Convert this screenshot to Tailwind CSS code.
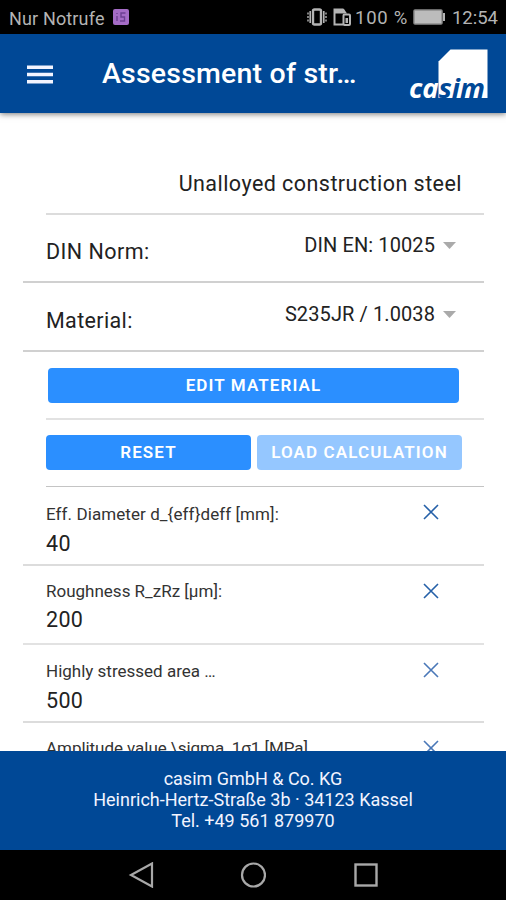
<!DOCTYPE html>
<html lang="en">
<head>
    <meta charset="UTF-8">
    <meta name="viewport" content="width=device-width, initial-scale=1.0">
    <title>Assessment of strength</title>
    <script src="https://cdn.jsdelivr.net/npm/@tailwindcss/browser@4"></script>
</head>
<body class="bg-white font-['Roboto',sans-serif] text-[#222]">

<div class="flex flex-col w-[506px] h-[900px] overflow-hidden">

    <!-- Status bar -->
    <div class="flex items-center shrink-0 h-[34px] bg-black text-[#b4b4b4] text-[18px] pl-[9px] pr-2 pt-[2px]">
        <span class="tracking-[0.15px]">Nur Notrufe</span>
        <svg class="ml-2 mb-[2px]" width="16" height="16" viewBox="0 0 16 16">
            <rect width="16" height="16" rx="2" fill="#a56cc6"/>
            <path d="M4 4v1M4 7v5M12.500 4H8v4h3.500v4H7" fill="none" stroke="#6d3f92" stroke-width="1.400"/>
        </svg>
        <div class="flex items-center ml-auto">
            <svg class="mr-[1px] mb-[2px]" width="20" height="18" viewBox="0 0 20 18" fill="none" stroke="#b4b4b4">
                <rect x="6" y="1.5" width="8" height="15" rx="1.5" stroke-width="2.4"/>
                <path d="M3.2 3v12M16.8 3v12" stroke-width="1.6"/>
                <path d="M1 4.5v9M19 4.5v9" stroke-width="1.4" stroke-dasharray="2 1.5"/>
            </svg>
            <svg class="ml-[4px] mb-[2px]" width="20" height="18" viewBox="0 0 20 18" fill="none" stroke="#b4b4b4">
                <path d="M11 16.500H2.500V1.500h9" stroke-width="2"/>
                <path d="M2 1h10l3 4.500H2z" fill="#b4b4b4" stroke="none"/>
                <rect x="11.500" y="6.500" width="6.500" height="10.500" rx="1" stroke-width="2"/>
                <rect x="13.500" y="10" width="2.500" height="5" fill="#b4b4b4" stroke="none"/>
            </svg>
            <span class="ml-[3px] pt-[1px] text-[18.500px] tracking-[0.7px]">100 %</span>
            <svg class="ml-[5px] mb-[2px]" width="33" height="16" viewBox="0 0 33 16">
                <rect x="1" y="1" width="28" height="14" rx="1" fill="#bcbcbc" stroke="#8c8c8c" stroke-width="1.500"/>
                <path d="M30 4h2v8h-2z" fill="#b4b4b4"/>
            </svg>
            <span class="ml-[6px] pt-[1px] text-[18.500px]">12:54</span>
        </div>
    </div>

    <!-- Toolbar -->
    <header class="relative z-10 flex items-center shrink-0 h-[79px] bg-[#004896] text-white shadow-[0_1px_6px_rgba(0,0,0,0.55)]">
        <svg class="ml-[27px] mt-[1px]" width="26" height="19" viewBox="0 0 26 19" stroke="#f2f4ff" stroke-width="3.600">
            <path d="M0 2.300h26M0 9.500h26M0 16.700h26"/>
        </svg>
        <h1 class="ml-[49px] pt-[2px] w-[270px] text-[28.500px] font-medium tracking-[0.2px] whitespace-nowrap">Assessment of str…</h1>
        <svg class="ml-auto mr-[14px]" width="85" height="58" viewBox="0 0 85 58">
            <defs>
                <clipPath id="left"><path d="M0 0h32v58H0z"/></clipPath>
                <clipPath id="right"><path d="M32 0h53v58H32z"/></clipPath>
            </defs>
            <path d="M31.500 16.500L43.500 4.500H80.500V53H31.500z" fill="#fff"/>
            <g font-family="Open Sans, sans-serif" font-size="27.500" font-weight="700" font-style="italic">
                <text x="2" y="53" textLength="76" lengthAdjust="spacingAndGlyphs" fill="#fff" clip-path="url(#left)">casim</text>
                <text x="2" y="53" textLength="76" lengthAdjust="spacingAndGlyphs" fill="#004896" clip-path="url(#right)">casim</text>
            </g>
        </svg>
    </header>

    <!-- Form -->
    <main class="flex-1 min-h-0 overflow-hidden pl-[23px] pr-[22px] text-[21.500px]">
        <div class="ml-[23px] h-[102px] pt-[57px] pr-[22px] text-right leading-[28px] tracking-[0.450px] border-b-2 border-[#dcdcdc]">Unalloyed construction steel</div>

        <div class="flex justify-between h-[68px] pl-[23px] pr-[28px] border-b-2 border-[#d0d0d0]">
            <span class="pt-[23px] leading-[28px] tracking-[0.450px]">DIN Norm:</span>
            <div class="flex items-center h-[28px] mt-[16px]">
                <span class="text-[20px] tracking-[0.1px]">DIN EN: 10025</span>
                <svg class="ml-2" width="13" height="7" viewBox="0 0 13 7"><path d="M0 0h13L6.500 7z" fill="#aaa"/></svg>
            </div>
        </div>

        <div class="flex justify-between h-[69px] pl-[23px] pr-[28px] border-b-2 border-[#d0d0d0]">
            <span class="pt-[24px] leading-[28px] tracking-[0.350px]">Material:</span>
            <div class="flex items-center h-[28px] mt-[17px]">
                <span class="text-[20px] tracking-[0.1px]">S235JR / 1.0038</span>
                <svg class="ml-2" width="13" height="7" viewBox="0 0 13 7"><path d="M0 0h13L6.500 7z" fill="#aaa"/></svg>
            </div>
        </div>

        <div class="ml-[23px] h-[68px] pt-4 pl-[2px] pr-[25px] border-b-2 border-[#e2e2e2]">
            <button class="block w-full h-[35px] rounded-[4px] bg-[#2b8fff] text-white text-[17px] font-semibold tracking-[1.1px]">EDIT MATERIAL</button>
        </div>

        <div class="flex gap-[6px] ml-[23px] h-[67px] pt-[15px] pr-[22px] border-b border-[#c4c4c4]">
            <button class="flex-1 h-[35px] rounded-[4px] bg-[#2b8fff] text-white text-[17px] font-semibold tracking-[1.1px]">RESET</button>
            <button class="flex-1 h-[35px] rounded-[4px] bg-[#95c7ff] text-white text-[17px] font-semibold tracking-[1.1px] whitespace-nowrap">LOAD CALCULATION</button>
        </div>

        <div class="flex justify-between h-[79px] pl-[23px] pr-[45px] border-b-2 border-[#dcdcdc]">
            <div class="pt-[17px]">
                <div class="text-[17px] leading-[20px] tracking-[0.080px] text-[#333]">Eff. Diameter d_{eff}deff [mm]:</div>
                <div class="mt-[6px] leading-[28px] tracking-[0.3px]">40</div>
            </div>
            <svg class="mt-[17px]" width="16" height="16" viewBox="0 0 16 16" stroke="#2560a8" stroke-width="1.600"><path d="M1 1l14 14M15 1L1 15"/></svg>
        </div>

        <div class="flex justify-between h-[79px] pl-[23px] pr-[45px] border-b-2 border-[#e2e2e2]">
            <div class="pt-[15px]">
                <div class="text-[17px] leading-[20px] text-[#333]">Roughness R_zRz [µm]:</div>
                <div class="mt-[5px] leading-[28px] tracking-[0.3px]">200</div>
            </div>
            <svg class="mt-[17px]" width="16" height="16" viewBox="0 0 16 16" stroke="#2560a8" stroke-width="1.600"><path d="M1 1l14 14M15 1L1 15"/></svg>
        </div>

        <div class="flex justify-between h-[78px] pl-[23px] pr-[45px] border-b-2 border-[#dcdcdc]">
            <div class="pt-[16px]">
                <div class="text-[17px] leading-[20px] text-[#333]">Highly stressed area …</div>
                <div class="mt-[6px] leading-[28px] tracking-[0.3px]">500</div>
            </div>
            <svg class="mt-[17px]" width="16" height="16" viewBox="0 0 16 16" stroke="#4a78b8" stroke-width="1.600"><path d="M1 1l14 14M15 1L1 15"/></svg>
        </div>

        <div class="flex justify-between h-[79px] pl-[23px] pr-[45px]">
            <div class="pt-[15px]">
                <div class="text-[17px] leading-[20px] tracking-[-0.05px] text-[#333]">Amplitude value \sigma_1σ1 [MPa]</div>
            </div>
            <svg class="mt-[17px]" width="16" height="16" viewBox="0 0 16 16" stroke="#4a78b8" stroke-width="1.600"><path d="M1 1l14 14M15 1L1 15"/></svg>
        </div>
    </main>

    <!-- Footer -->
    <footer class="relative shrink-0 h-[99px] pt-[17px] bg-[#004896] text-[#f2f4ff] text-center text-[18px] leading-[21px]">
        <p>casim GmbH &amp; Co. KG</p>
        <p>Heinrich-Hertz-Straße 3b · 34123 Kassel</p>
        <p>Tel. +49 561 879970</p>
    </footer>

    <!-- Android navigation -->
    <nav class="flex items-center justify-center gap-[86px] shrink-0 h-[50px] bg-black">
        <svg width="26" height="26" viewBox="0 0 26 26" fill="none" stroke="#a8a8a8" stroke-width="2.200"><path d="M24 1.500v23L3 13z"/></svg>
        <svg width="26" height="26" viewBox="0 0 26 26" fill="none" stroke="#a8a8a8" stroke-width="2.200"><circle cx="13.500" cy="13" r="11.500"/></svg>
        <svg width="26" height="26" viewBox="0 0 26 26" fill="none" stroke="#a8a8a8" stroke-width="2.400"><rect x="3.500" y="2.500" width="21" height="21"/></svg>
    </nav>
</div>

</body>
</html>
